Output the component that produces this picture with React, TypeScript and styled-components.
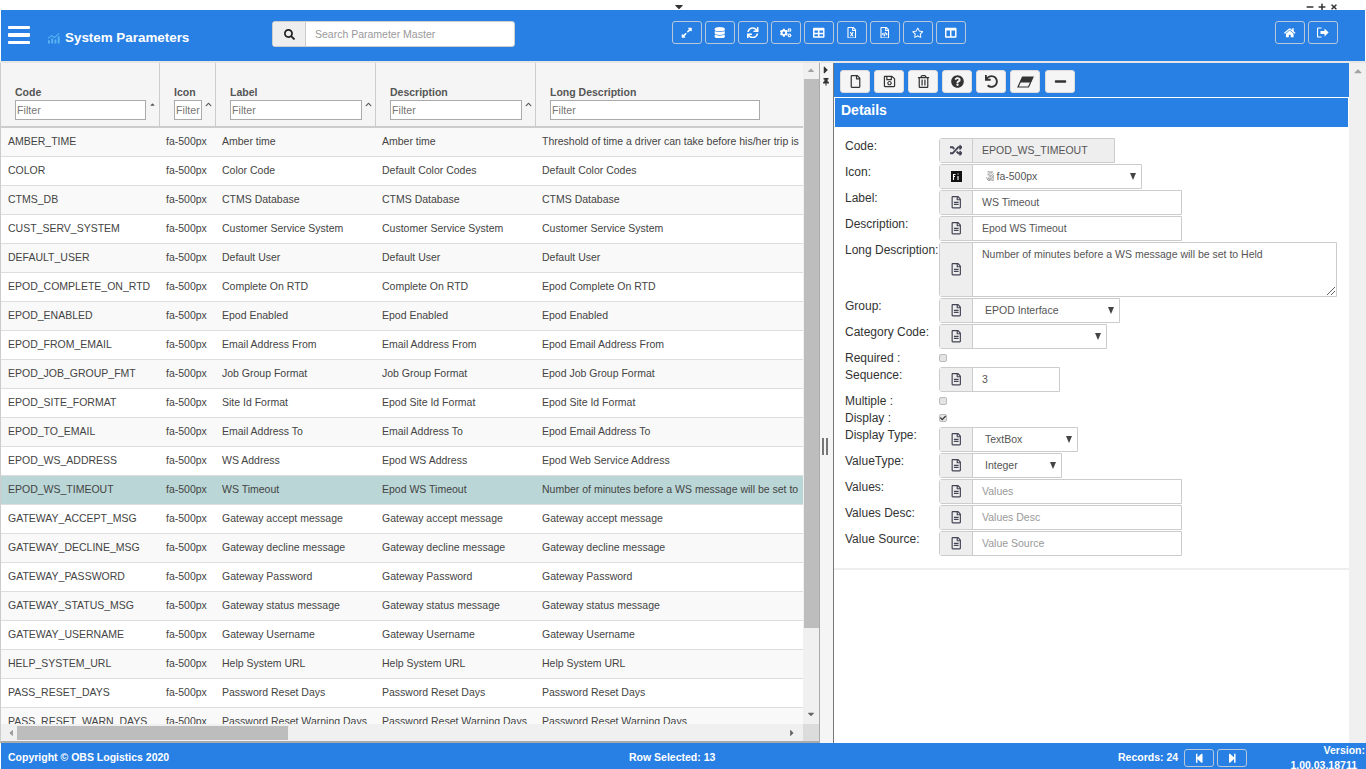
import React from "react";
import styled, { createGlobalStyle } from "styled-components";
import {
  FaExpandAlt, FaDatabase, FaSync, FaCogs, FaTable, FaRegFileExcel, FaRegFileCode, FaRegStar, FaColumns,
  FaHome, FaSearch, FaRegFile, FaRegSave, FaRegTrashAlt, FaQuestionCircle, FaUndo, FaMinus,
  FaRandom, Fa500Px, FaRegFileAlt, FaStepBackward, FaStepForward, FaThumbtack, FaCheck, FaCaretDown,
  FaCaretUp, FaCaretLeft, FaCaretRight, FaPlus, FaTimes, FaChevronUp,
} from "react-icons/fa";

const BLUE = "#2880e4";
const FONT = `"Liberation Sans", Arial, sans-serif`;

const Global = createGlobalStyle`
  html, body { margin: 0; padding: 0; height: 100%; overflow: hidden; background: #fff; }
  #root { height: 100%; }
  * { box-sizing: border-box; }
  body { font-family: ${FONT}; font-size: 11px; color: #444; }
`;

const Page = styled.div`
  width: 1366px; height: 769px; display: flex; flex-direction: column; overflow: hidden;
`;
const TopStrip = styled.div`
  height: 10px; flex: none; display: grid; grid-template-columns: 673px 12px 1fr auto; align-items: center; color: #333;
`;
const Collapse = styled.span`
  grid-column: 2; display: flex; justify-content: center; font-size: 13px; line-height: 0;
`;
const WindowCtl = styled.span`
  grid-column: 4; display: flex; gap: 4px; padding-right: 28px; font-size: 8px; color: #333;
`;
const Header = styled.header`
  height: 51px; flex: none; background: ${BLUE}; display: flex; align-items: flex-start; margin: 0 1px;
`;
const Burger = styled.div`
  width: 22px; margin: 16px 0 0 7px; display: flex; flex-direction: column; gap: 4px;
  span { display: block; height: 3.4px; background: #fff; border-radius: 1px; }
`;
const Brand = styled.div`
  display: flex; align-items: center; gap: 4px; margin: 19px 0 0 18px; width: 224px;
  color: #fff; font: 700 13.4px/18px ${FONT};
`;
const Search = styled.div`
  display: flex; height: 26px; width: 243px; margin-top: 11px; border: 1px solid #ccc; border-radius: 3px; overflow: hidden; background: #fff;
`;
const SearchIcon = styled.div`
  width: 33px; background: #eee; border-right: 1px solid #ccc; display: flex; align-items: center; justify-content: center; color: #222; font-size: 11px;
`;
const SearchText = styled.div`
  flex: 1; padding: 0 9px; line-height: 24px; color: #999; font-size: 10.5px;
`;
const ToolGroup = styled.div<{ $left: number }>`
  display: flex; gap: 3px; margin-top: 11px; margin-left: ${(p) => p.$left}px;
`;
const HeadBtn = styled.div`
  width: 30px; height: 23px; border: 1px solid #b8c8da; border-radius: 3px; color: #fff;
  display: flex; align-items: center; justify-content: center; font-size: 11.5px;
`;

const Body = styled.div`
  flex: 1; min-height: 0; display: flex; border-top: 2px solid #e6e6e6;
`;
const ListPane = styled.section`
  width: 820px; flex: none; display: grid; grid-template-columns: 802px 16px; grid-template-rows: 1fr 17px;
  border-left: 1px solid #ccc; border-right: 1px solid #aaa; border-bottom: 2px solid #aaa; background: #f0f0f0; min-height: 0;
`;
const GridArea = styled.div`
  overflow: hidden; background: #fff; min-height: 0;
`;
const Cols = "159px 56px 160px 160px 1000px";
const HeadRow = styled.div`
  display: grid; grid-template-columns: ${Cols}; width: 1535px; height: 65px; background: #f5f5f5; border-bottom: 2px solid #ccc;
`;
const HeadCell = styled.div`
  position: relative; padding: 23px 0 0 14px; border-right: 1px solid #ccc; color: #555; font: 700 10.5px/13px ${FONT};
`;
const FilterRow = styled.div`
  display: flex; align-items: center; margin-top: 1px;
`;
const Filter = styled.div<{ $w: number }>`
  width: ${(p) => p.$w}px; height: 20px; border: 1px solid #aaa; background: #fff; color: #777; font: 400 10.67px/18px ${FONT}; padding-left: 1px; overflow: hidden;
`;
const Sort = styled.span`
  position: absolute; right: 3px; top: 38px; font-size: 7px; line-height: 0; color: #555;
`;
const Row = styled.div<{ $alt: boolean; $sel: boolean }>`
  display: grid; grid-template-columns: ${Cols}; width: 1535px; height: 29px; align-items: center;
  background: ${(p) => (p.$sel ? "#bad6d6" : p.$alt ? "#f9f9f9" : "#fff")};
  border-bottom: 1px solid #ddd; color: #444; font-size: 10.5px; white-space: nowrap;
`;
const Cell = styled.div<{ $pad: number }>`
  padding-left: ${(p) => p.$pad}px; overflow: hidden; padding-bottom: 3px;
`;
const LongCell = styled(Cell)`
  width: 265px;
`;
const VBar = styled.div`
  background: #f0f0f0; display: flex; flex-direction: column; align-items: center; color: #a3a3a3;
`;
const VThumb = styled.div`
  width: 15px; height: 549px; background: #bdbdbd; margin-top: 3px;
`;
const BarArrow = styled.span`
  height: 13px; display: flex; align-items: center; justify-content: center; font-size: 10px; flex: none;
`;
const BarArrowEnd = styled(BarArrow)`
  margin-top: auto; margin-bottom: 4px; color: #666;
`;
const HBar = styled.div`
  background: #f0f0f0; display: flex; align-items: center; color: #666; padding-left: 5px;
`;
const HThumb = styled.div`
  width: 271px; height: 14px; background: #bdbdbd; margin-left: 1px;
`;
const Corner = styled.div`
  background: #dcdcdc;
`;
const HEnd = styled.span`
  margin-left: auto; padding-right: 6px; font-size: 10px; display: flex;
`;
const Splitter = styled.div`
  width: 14px; flex: none; background: #f5f5f5; border-right: 1px solid #777; display: flex; flex-direction: column; align-items: center; position: relative; color: #333; padding: 1px 1px 0 0; gap: 2px; font-size: 8px;
`;
const Grip = styled.div`
  position: absolute; top: 375px; left: 2px; width: 6px; height: 17px; border-left: 2px solid #777; border-right: 2px solid #777;
`;
const DetailPane = styled.section`
  width: 515px; flex: none; display: flex; flex-direction: column; background: #fff;
`;
const ActionBar = styled.div`
  height: 34px; flex: none; background: ${BLUE}; display: flex; gap: 4px; padding: 7px 0 0 6px;
`;
const ActionBtn = styled.div`
  width: 30px; height: 23px; background: #f5f5f5; border: 1px solid #ddd; border-radius: 3px; display: flex; align-items: center; justify-content: center; color: #333; font-size: 13px;
  &:last-child { margin-left: 1px; }
`;
const DetailsTitle = styled.div`
  height: 29px; flex: none; margin: 1px 1px 0 1px; background: ${BLUE}; color: #fff; font: 700 14px/25px ${FONT}; padding-left: 6px;
`;
const Form = styled.div`
  padding: 11px 0 11px 11px; border-bottom: 2px solid #eee;
`;
const FieldRow = styled.div<{ $h?: number }>`
  display: flex; height: ${(p) => p.$h ?? 26}px;
`;
const Label = styled.div`
  width: 94px; flex: none; color: #333; font-size: 12px; line-height: 14px; padding-top: 1px; white-space: nowrap;
`;
const CheckRow = styled.div<{ $h: number; $up?: boolean }>`
  display: flex; align-items: center; height: ${(p) => p.$h}px; color: #333; font-size: 12px; padding-bottom: ${(p) => (p.$up ? 1 : 0)}px;
`;
const CheckLabel = styled.div`
  width: 94px; flex: none;
`;
const Check = styled.div`
  width: 8px; height: 8px; background: #e4e4e4; border: 1px solid #bbb; border-radius: 2px; display: flex; align-items: center; justify-content: center; color: #333; font-size: 6px;
`;
const Group = styled.div<{ $w: number; $h?: number }>`
  width: ${(p) => p.$w}px; height: ${(p) => p.$h ?? 25}px; display: flex; border: 1px solid #ccc; border-radius: 3px 0 0 3px; background: #fff;
`;
const Addon = styled.div`
  width: 33px; flex: none; background: #eee; border-right: 1px solid #ccc; display: flex; align-items: center; justify-content: center; color: #445; font-size: 12.5px;
`;
const Value = styled.div<{ $off?: boolean; $ph?: boolean; $sel?: boolean }>`
  flex: 1; min-width: 0; position: relative; background: ${(p) => (p.$off ? "#eee" : "#fff")};
  color: ${(p) => (p.$ph ? "#999" : "#555")}; font-size: 10.5px; white-space: nowrap;
  padding-left: ${(p) => (p.$sel ? 12 : 9)}px; line-height: 22px;
`;
const SelectArrow = styled.span`
  position: absolute; right: 5px; top: 8px; width: 0; height: 0;
  border-left: 3.5px solid transparent; border-right: 3.5px solid transparent; border-top: 7px solid #444;
`;
const ValueIcon = styled(Fa500Px)`
  vertical-align: -1px; color: #888; margin-right: 1px;
`;
const Resize = styled.svg`
  position: absolute; right: 1px; bottom: 1px; width: 8px; height: 8px;
`;
const Gutter = styled.div`
  width: 17px; flex: none; background: #f0f0f0; display: flex; justify-content: center; align-items: flex-start; color: #a3a3a3; font-size: 12px; padding-top: 2px;
`;
const Footer = styled.footer`
  height: 26px; flex: none; background: ${BLUE}; color: #fff; display: flex; align-items: flex-start; font: 700 10.5px/14px ${FONT}; overflow: hidden; margin-left: 1px;
`;
const FootText = styled.div<{ $w: number; $pad?: number }>`
  width: ${(p) => p.$w}px; flex: none; padding: 7px 0 0 ${(p) => p.$pad ?? 0}px; white-space: nowrap;
`;
const FootBtn = styled.div`
  width: 30px; height: 18px; margin: 6px 3px 0 0; border: 1px solid #b8c8da; border-radius: 3px; display: flex; align-items: center; justify-content: center; font-size: 10.5px;
`;
const Version = styled.div`
  margin-left: auto; text-align: right; line-height: 15px; padding-right: 1px;
`;
const VersionNumber = styled.div`
  padding-right: 8px;
`;

const rows: [string, string, string, string][] = [
  ["AMBER_TIME", "Amber time", "Amber time", "Threshold of time a driver can take before his/her trip is late"],
  ["COLOR", "Color Code", "Default Color Codes", "Default Color Codes"],
  ["CTMS_DB", "CTMS Database", "CTMS Database", "CTMS Database"],
  ["CUST_SERV_SYSTEM", "Customer Service System", "Customer Service System", "Customer Service System"],
  ["DEFAULT_USER", "Default User", "Default User", "Default User"],
  ["EPOD_COMPLETE_ON_RTD", "Complete On RTD", "Complete On RTD", "Epod Complete On RTD"],
  ["EPOD_ENABLED", "Epod Enabled", "Epod Enabled", "Epod Enabled"],
  ["EPOD_FROM_EMAIL", "Email Address From", "Email Address From", "Epod Email Address From"],
  ["EPOD_JOB_GROUP_FMT", "Job Group Format", "Job Group Format", "Epod Job Group Format"],
  ["EPOD_SITE_FORMAT", "Site Id Format", "Epod Site Id Format", "Epod Site Id Format"],
  ["EPOD_TO_EMAIL", "Email Address To", "Email Address To", "Epod Email Address To"],
  ["EPOD_WS_ADDRESS", "WS Address", "Epod WS Address", "Epod Web Service Address"],
  ["EPOD_WS_TIMEOUT", "WS Timeout", "Epod WS Timeout", "Number of minutes before a WS message will be set to Held"],
  ["GATEWAY_ACCEPT_MSG", "Gateway accept message", "Gateway accept message", "Gateway accept message"],
  ["GATEWAY_DECLINE_MSG", "Gateway decline message", "Gateway decline message", "Gateway decline message"],
  ["GATEWAY_PASSWORD", "Gateway Password", "Gateway Password", "Gateway Password"],
  ["GATEWAY_STATUS_MSG", "Gateway status message", "Gateway status message", "Gateway status message"],
  ["GATEWAY_USERNAME", "Gateway Username", "Gateway Username", "Gateway Username"],
  ["HELP_SYSTEM_URL", "Help System URL", "Help System URL", "Help System URL"],
  ["PASS_RESET_DAYS", "Password Reset Days", "Password Reset Days", "Password Reset Days"],
  ["PASS_RESET_WARN_DAYS", "Password Reset Warning Days", "Password Reset Warning Days", "Password Reset Warning Days"],
];

const heads: [string, number, boolean][] = [
  ["Code", 131, true],
  ["Icon", 28, false],
  ["Label", 132, false],
  ["Description", 132, false],
  ["Long Description", 210, false],
];

const SignOut = () => (
  <svg width="12" height="11" viewBox="0 0 12 11" fill="none" stroke="#fff">
    <path d="M4.5 1H1.5a1 1 0 0 0-1 1v7a1 1 0 0 0 1 1h3" strokeWidth="1.2" />
    <path d="M3.5 4h4V1.6L11.6 5.5 7.5 9.4V7h-4z" fill="#fff" stroke="none" />
  </svg>
);
const Trend = () => (
  <svg width="13" height="12" viewBox="0 0 14 12">
    <path d="M0 12V8.5h2V12zM3.5 12V6.5h2V12zM7 12V7.5h2V12zM10.5 12V4.5h2V12z" fill="#5cb3f2" />
    <path d="M0 6.5l4-3 3 2 5-4.5" stroke="#5cb3f2" strokeWidth="1.1" fill="none" />
  </svg>
);
const Eraser = () => (
  <svg width="17" height="12" viewBox="0 0 17 12">
    <path d="M5.5 1H16L11.5 11H1z" fill="none" stroke="#333" strokeWidth="1.2" />
    <path d="M5.5 1H16l-2.5 5.5H3z" fill="#333" />
  </svg>
);
const MissingGlyph = () => (
  <svg width="11" height="11" viewBox="0 0 11 11">
    <rect width="11" height="11" fill="#111" />
    <path d="M2.5 9V3.5h2M2 5.5h2M7 2.5v1M7 5v4" stroke="#fff" strokeWidth="1.1" fill="none" />
  </svg>
);

type FieldProps = {
  label: string; w: number; icon?: React.ReactNode; value?: string; ph?: boolean; off?: boolean; sel?: boolean; rowH?: number;
};
const Field = ({ label, w, icon = <FaRegFileAlt />, value, ph, off, sel, rowH }: FieldProps) => (
  <FieldRow $h={rowH}>
    <Label>{label}</Label>
    <Group $w={w}>
      <Addon>{icon}</Addon>
      <Value $off={off} $ph={ph} $sel={sel}>
        {value}
        {sel && <SelectArrow />}
      </Value>
    </Group>
  </FieldRow>
);

export default function App() {
  return (
    <Page>
      <Global />
      <TopStrip>
        <Collapse><FaCaretDown /></Collapse>
        <WindowCtl><FaMinus /><FaPlus /><FaTimes /></WindowCtl>
      </TopStrip>
      <Header>
        <Burger><span /><span /><span /></Burger>
        <Brand><Trend />System Parameters</Brand>
        <Search>
          <SearchIcon><FaSearch /></SearchIcon>
          <SearchText>Search Parameter Master</SearchText>
        </Search>
        <ToolGroup $left={157}>
          <HeadBtn><FaExpandAlt /></HeadBtn>
          <HeadBtn><FaDatabase /></HeadBtn>
          <HeadBtn><FaSync /></HeadBtn>
          <HeadBtn><FaCogs /></HeadBtn>
          <HeadBtn><FaTable /></HeadBtn>
          <HeadBtn><FaRegFileExcel /></HeadBtn>
          <HeadBtn><FaRegFileCode /></HeadBtn>
          <HeadBtn><FaRegStar /></HeadBtn>
          <HeadBtn><FaColumns /></HeadBtn>
        </ToolGroup>
        <ToolGroup $left={309}>
          <HeadBtn><FaHome /></HeadBtn>
          <HeadBtn><SignOut /></HeadBtn>
        </ToolGroup>
      </Header>
      <Body>
        <ListPane>
          <GridArea>
            <HeadRow>
              {heads.map(([name, w, active]) => (
                <HeadCell key={name}>
                  {name}
                  <FilterRow><Filter $w={w}>Filter</Filter></FilterRow>
                  {name !== "Long Description" && (
                    <Sort>{active ? <FaCaretUp /> : <FaChevronUp />}</Sort>
                  )}
                </HeadCell>
              ))}
            </HeadRow>
            {rows.map((r, i) => (
              <Row key={r[0]} $alt={i % 2 === 0} $sel={r[0] === "EPOD_WS_TIMEOUT"}>
                <Cell $pad={7}>{r[0]}</Cell>
                <Cell $pad={6}>fa-500px</Cell>
                <Cell $pad={6}>{r[1]}</Cell>
                <Cell $pad={6}>{r[2]}</Cell>
                <LongCell $pad={6}>{r[3]}</LongCell>
              </Row>
            ))}
          </GridArea>
          <VBar>
            <BarArrow><FaCaretUp /></BarArrow>
            <VThumb />
            <BarArrowEnd><FaCaretDown /></BarArrowEnd>
          </VBar>
          <HBar>
            <FaCaretLeft size={10} color="#999" />
            <HThumb />
            <HEnd><FaCaretRight /></HEnd>
          </HBar>
          <Corner />
        </ListPane>
        <Splitter>
          <FaCaretRight size={12} />
          <FaThumbtack />
          <Grip />
        </Splitter>
        <DetailPane>
          <ActionBar>
            <ActionBtn><FaRegFile /></ActionBtn>
            <ActionBtn><FaRegSave /></ActionBtn>
            <ActionBtn><FaRegTrashAlt /></ActionBtn>
            <ActionBtn><FaQuestionCircle /></ActionBtn>
            <ActionBtn><FaUndo /></ActionBtn>
            <ActionBtn><Eraser /></ActionBtn>
            <ActionBtn><FaMinus /></ActionBtn>
          </ActionBar>
          <DetailsTitle>Details</DetailsTitle>
          <Form>
            <Field label="Code:" w={176} icon={<FaRandom />} value="EPOD_WS_TIMEOUT" off />
            <FieldRow>
              <Label>Icon:</Label>
              <Group $w={203}>
                <Addon><MissingGlyph /></Addon>
                <Value $sel>
                  <ValueIcon />
                  fa-500px
                  <SelectArrow />
                </Value>
              </Group>
            </FieldRow>
            <Field label="Label:" w={243} value="WS Timeout" />
            <Field label="Description:" w={243} value="Epod WS Timeout" />
            <FieldRow $h={56}>
              <Label>Long Description:</Label>
              <Group $w={398} $h={55}>
                <Addon><FaRegFileAlt /></Addon>
                <Value>
                  Number of minutes before a WS message will be set to Held
                  <Resize viewBox="0 0 8 8"><path d="M0 8L8 0M4 8L8 4" stroke="#666" strokeWidth="1" /></Resize>
                </Value>
              </Group>
            </FieldRow>
            <Field label="Group:" w={181} value="EPOD Interface" sel />
            <Field label="Category Code:" w={168} value="" sel />
            <CheckRow $h={17} $up><CheckLabel>Required :</CheckLabel><Check /></CheckRow>
            <Field label="Sequence:" w={121} value="3" rowH={25} />
            <CheckRow $h={17}><CheckLabel>Multiple :</CheckLabel><Check /></CheckRow>
            <CheckRow $h={18}><CheckLabel>Display :</CheckLabel><Check><FaCheck /></Check></CheckRow>
            <Field label="Display Type:" w={139} value="TextBox" sel />
            <Field label="ValueType:" w={123} value="Integer" sel />
            <Field label="Values:" w={243} value="Values" ph />
            <Field label="Values Desc:" w={243} value="Values Desc" ph />
            <Field label="Value Source:" w={243} value="Value Source" ph />
          </Form>
        </DetailPane>
        <Gutter><FaCaretUp /></Gutter>
      </Body>
      <Footer>
        <FootText $w={628} $pad={7}>Copyright © OBS Logistics 2020</FootText>
        <FootText $w={489}>Row Selected: 13</FootText>
        <FootText $w={66}>Records: 24</FootText>
        <FootBtn><FaStepBackward /></FootBtn>
        <FootBtn><FaStepForward /></FootBtn>
        <Version>Version:<VersionNumber>1.00.03.18711</VersionNumber></Version>
      </Footer>
    </Page>
  );
}
